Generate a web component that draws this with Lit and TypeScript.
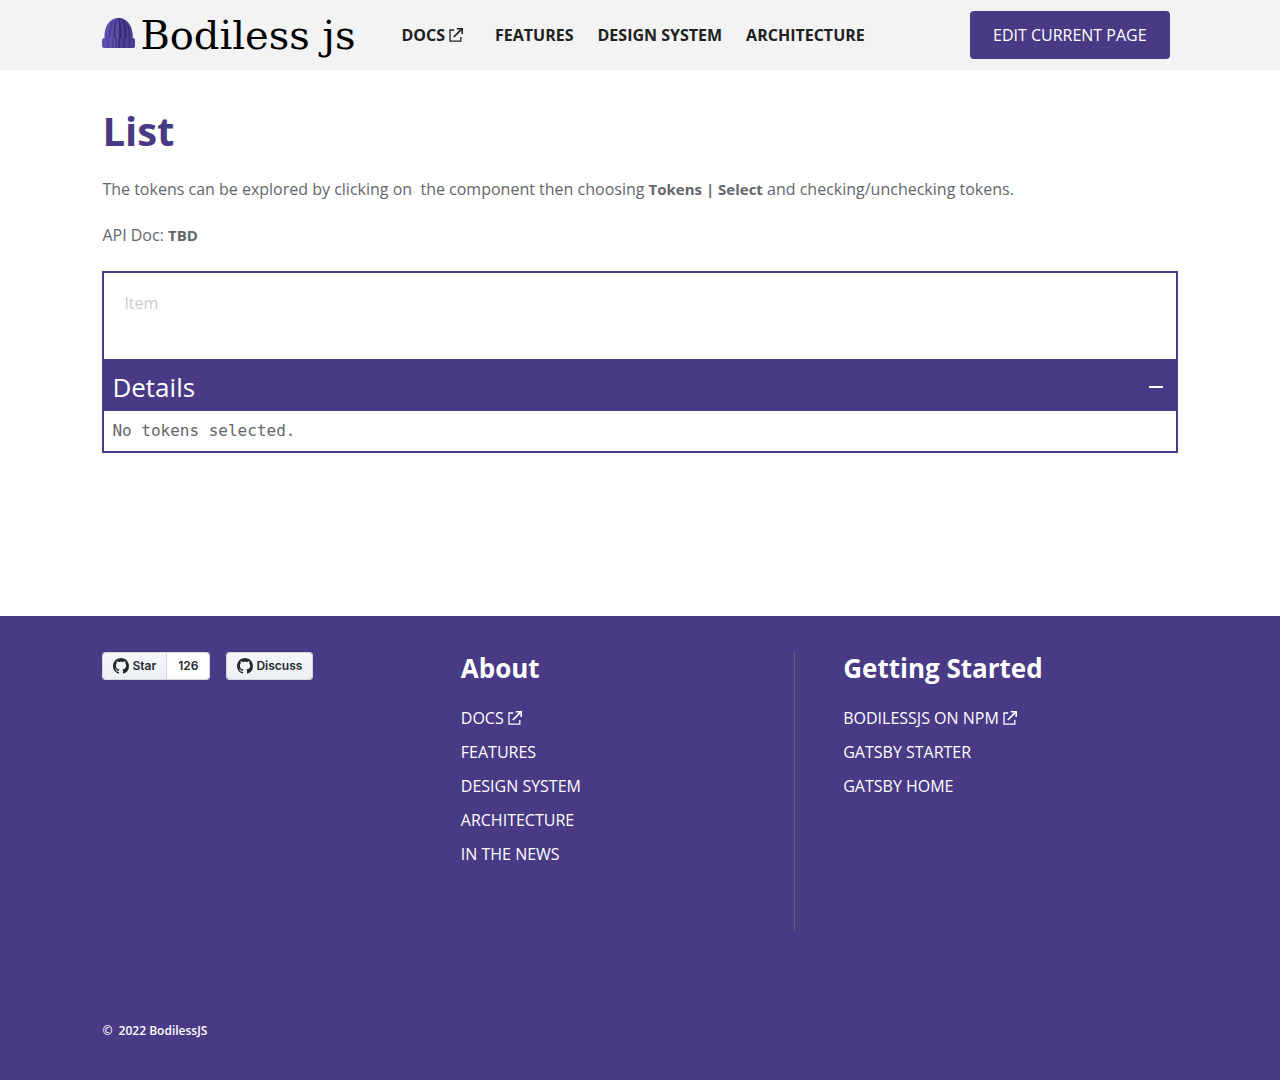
import { LitElement, html, css, svg, nothing } from "lit";
import { customElement, property, state } from "lit/decorators.js";

interface NavLink {
  label: string;
  href: string;
  external?: boolean;
}

const siteLinks: NavLink[] = [
  { label: "DOCS", href: "#docs", external: true },
  { label: "FEATURES", href: "#features" },
  { label: "DESIGN SYSTEM", href: "#design-system" },
  { label: "ARCHITECTURE", href: "#architecture" },
];

const aboutLinks: NavLink[] = [...siteLinks, { label: "IN THE NEWS", href: "#news" }];

const startLinks: NavLink[] = [
  { label: "BODILESSJS ON NPM", href: "#npm", external: true },
  { label: "GATSBY STARTER", href: "#gatsby-starter" },
  { label: "GATSBY HOME", href: "#gatsby-home" },
];

const externalIcon = html`<svg class="external" viewBox="0 0 14 14" aria-hidden="true">
  <path d="M5.2 2H1v11.2h10.8V9" fill="none" stroke="currentColor" stroke-width="1.3" />
  <path d="M4.8 9 12.4 1.400" fill="none" stroke="currentColor" stroke-width="1.7" />
  <path d="M7.8 0H14v6h-1.600V1.600H7.8z" fill="currentColor" />
</svg>`;

const githubMark = html`<svg class="mark" viewBox="0 0 16 16" aria-hidden="true">
  <path
    fill="currentColor"
    d="M8 0C3.58 0 0 3.58 0 8c0 3.54 2.29 6.53 5.47 7.59.4.07.55-.17.55-.38 0-.19-.01-.82-.01-1.49-2.01.37-2.53-.49-2.69-.94-.09-.23-.48-.94-.82-1.13-.28-.15-.68-.52-.01-.53.63-.01 1.08.58 1.23.82.72 1.21 1.87.87 2.33.66.07-.52.28-.87.51-1.07-1.78-.2-3.64-.89-3.64-3.95 0-.87.31-1.59.82-2.15-.08-.2-.36-1.02.08-2.12 0 0 .67-.21 2.2.82.64-.18 1.32-.27 2-.27s1.36.09 2 .27c1.53-1.04 2.2-.82 2.2-.82.44 1.1.16 1.92.08 2.12.51.56.82 1.27.82 2.15 0 3.07-1.87 3.75-3.65 3.95.29.25.54.73.54 1.48 0 1.07-.01 1.93-.01 2.2 0 .21.15.46.55.38A8.01 8.01 0 0 0 16 8c0-4.42-3.58-8-8-8z"
  />
</svg>`;

const brimFolds = [
  { x: 6, color: "#4f4199" },
  { x: 10.5, color: "#4a3c90" },
  { x: 14, color: "#3f327e" },
  { x: 17, color: "#33286a" },
  { x: 22, color: "#392d75" },
  { x: 27.5, color: "#392d75" },
];

const hat = html`<svg class="hat" viewBox="0 0 33 30" aria-hidden="true">
  <path d="M2.500 21C1.800 8 7.500 0 16.500 0S31.200 8 30.500 21z" fill="#5d4dab" />
  <path d="M17 0C27 1.500 31.200 10 30.500 21H17z" fill="#4b3e92" />
  <path d="M11.500 2C7.500 7 6.800 13 7 21h1.400C8.600 13 9.500 7 12.800 1.200z" fill="#4a3c90" />
  <path d="M14.800.4C12 5 11.600 12 11.800 21h1.400C13.400 12 14 5 15.800.2z" fill="#40337f" />
  <path d="M16.200 0c1.300 5 1.300 13 1.300 21H19c.2-8-.2-16-1.600-21z" fill="#2f2563" />
  <path d="M19 .5c3 4.500 3.800 12 3.800 20.500h1.600c.1-8-.9-16-3.900-20z" fill="#33286a" />
  <path d="M22.500 2.300C25.800 6.500 27 13 26.800 21h1.300c.2-8-1-14-4-17.600z" fill="#392d75" />
  <rect x="0" y="20" width="33" height="10" rx="2.800" fill="#5f4fae" />
  <path d="M17 20h13.200a2.800 2.800 0 0 1 2.800 2.800v4.400a2.800 2.800 0 0 1-2.800 2.800H17z" fill="#4d4096" />
  ${brimFolds.map((f) => svg`<path d="M${f.x} 20v10" stroke=${f.color} stroke-width="1.200" />`)}
</svg>`;

const renderLinks = (links: NavLink[]) => html`<ul class="links">
  ${links.map(
    (l) => html`<li><a href=${l.href}>${l.label}${l.external ? externalIcon : nothing}</a></li>`
  )}
</ul>`;

const shared = css`
  :host {
    display: block;
  }
  *,
  *::before {
    box-sizing: border-box;
  }
  a {
    color: inherit;
    text-decoration: none;
  }
  .links {
    display: flex;
    list-style: none;
    margin: 0;
    padding: 0;
  }
  .links a {
    display: inline-flex;
    align-items: center;
  }
  .external {
    width: 14px;
    height: 14px;
    margin-left: 4px;
  }
`;

@customElement("site-header")
export class SiteHeader extends LitElement {
  static styles = [
    shared,
    css`
      .bar {
        display: flex;
        align-items: center;
        min-height: 70px;
        padding: 0 8%;
        background: #f3f3f3;
      }
      .logo {
        display: flex;
        align-items: center;
        gap: 5px;
        margin-right: 46px;
        color: #000;
        font: 40px/48px "DejaVu Serif", serif;
        white-space: nowrap;
      }
      .hat {
        width: 33px;
        height: 30px;
        margin-bottom: 4px;
      }
      .links {
        gap: 24px;
        color: #202020;
        font-weight: 700;
        white-space: nowrap;
      }
      .external {
        margin-right: 8px;
      }
      .edit {
        height: 48px;
        margin-left: auto;
        margin-right: 8px;
        padding: 0 23px;
        border: 0;
        border-radius: 4px;
        background: #483a84;
        color: #fff;
        font: 500 16px/24px "Open Sans", sans-serif;
        white-space: nowrap;
        cursor: pointer;
      }
    `,
  ];

  render() {
    return html`<header class="bar">
      <a class="logo" href="#home">${hat}<span>Bodiless js</span></a>
      <nav aria-label="Main">${renderLinks(siteLinks)}</nav>
      <button class="edit" type="button">EDIT CURRENT PAGE</button>
    </header>`;
  }
}

@customElement("token-explorer")
export class TokenExplorer extends LitElement {
  @state() private open = true;

  static styles = [
    shared,
    css`
      .box {
        border: 2px solid #483a84;
      }
      .preview {
        margin: 0;
        padding: 18px 20px 44px;
        list-style: none;
        color: #ccc;
      }
      .toggle {
        display: flex;
        align-items: center;
        justify-content: space-between;
        width: 100%;
        padding: 4px 13px 0 8px;
        border: 0;
        background: #483a84;
        color: #fff;
        font: 500 26px/48px "Open Sans", sans-serif;
        cursor: pointer;
      }
      .sign {
        width: 14px;
        height: 14px;
      }
      .tokens {
        padding: 8px;
        font-family: "DejaVu Sans Mono", monospace;
      }
    `,
  ];

  render() {
    return html`<section class="box">
      <ul class="preview">
        <li>Item</li>
      </ul>
      <button
        class="toggle"
        type="button"
        aria-expanded=${this.open ? "true" : "false"}
        @click=${() => (this.open = !this.open)}
      >
        Details
        <svg class="sign" viewBox="0 0 14 14" aria-hidden="true">
          <path d=${this.open ? "M0 7h14" : "M0 7h14M7 0v14"} stroke="currentColor" stroke-width="2" />
        </svg>
      </button>
      ${this.open ? html`<div class="tokens">No tokens selected.</div>` : nothing}
    </section>`;
  }
}

@customElement("github-button")
export class GithubButton extends LitElement {
  @property() label = "";
  @property() count = "";

  static styles = [
    shared,
    css`
      .group {
        display: flex;
        height: 28px;
        border: 1px solid #d3d5da;
        border-radius: 3px;
        overflow: hidden;
        color: #24292f;
        font: 600 12px/26px Inter, sans-serif;
      }
      .action {
        display: flex;
        align-items: center;
        gap: 3px;
        padding: 0 10px;
        background: linear-gradient(#f6f8fa, #ebf0f4);
      }
      .count {
        padding: 0 11px;
        border-left: 1px solid #d3d5da;
        background: #fff;
      }
      .mark {
        width: 16px;
        height: 16px;
      }
    `,
  ];

  render() {
    return html`<div class="group">
      <a class="action" href="#github">${githubMark}<span>${this.label}</span></a>
      ${this.count ? html`<a class="count" href="#stars">${this.count}</a>` : nothing}
    </div>`;
  }
}

@customElement("site-footer")
export class SiteFooter extends LitElement {
  static styles = [
    shared,
    css`
      .footer {
        padding: 36px 8% 37px;
        background: #483a84;
        color: #fff;
        font-weight: 500;
      }
      .columns {
        display: grid;
        grid-template-columns: repeat(3, 1fr);
      }
      .buttons {
        display: flex;
        align-items: flex-start;
        gap: 16px;
      }
      .about {
        margin-right: 24px;
        padding-bottom: 64px;
        border-right: 1px solid #666666;
      }
      .start {
        padding-left: 24px;
      }
      .title {
        margin: 0 0 22px;
        font-size: 26px;
        line-height: 32px;
        font-weight: 700;
      }
      .links {
        flex-direction: column;
        gap: 10px;
      }
      .copyright {
        margin: 89px 0 0;
        font-size: 12px;
        font-weight: 600;
      }
    `,
  ];

  render() {
    return html`<footer class="footer">
      <div class="columns">
        <div class="buttons">
          <github-button label="Star" count="126"></github-button>
          <github-button label="Discuss"></github-button>
        </div>
        <nav class="about" aria-labelledby="about-title">
          <h2 class="title" id="about-title">About</h2>
          ${renderLinks(aboutLinks)}
        </nav>
        <nav class="start" aria-labelledby="start-title">
          <h2 class="title" id="start-title">Getting Started</h2>
          ${renderLinks(startLinks)}
        </nav>
      </div>
      <p class="copyright">©&nbsp; 2022 BodilessJS</p>
    </footer>`;
  }
}

@customElement("app-root")
export class AppRoot extends LitElement {
  static styles = [
    shared,
    css`
      :host {
        display: flex;
        flex-direction: column;
        min-height: 100vh;
        background: #fff;
        color: #63666a;
        font: 16px/24px "Open Sans", sans-serif;
      }
      .content {
        flex: 1;
        padding: 35px 8%;
      }
      .heading {
        margin: 0 0 20px;
        color: #483a84;
        font-size: 40px;
        line-height: 52px;
        font-weight: 700;
      }
      .text {
        margin: 0 0 22px;
      }
      .text b,
      .api b {
        font-size: 15px;
      }
      .api {
        margin: 0 0 24px;
      }
    `,
  ];

  render() {
    return html`
      <site-header></site-header>
      <main class="content">
        <h1 class="heading">List</h1>
        <p class="text">
          The tokens can be explored by clicking on&nbsp; the component then choosing
          <b>Tokens | Select</b> and checking/unchecking tokens.
        </p>
        <p class="api">API Doc: <b>TBD</b></p>
        <token-explorer></token-explorer>
      </main>
      <site-footer></site-footer>
    `;
  }
}
